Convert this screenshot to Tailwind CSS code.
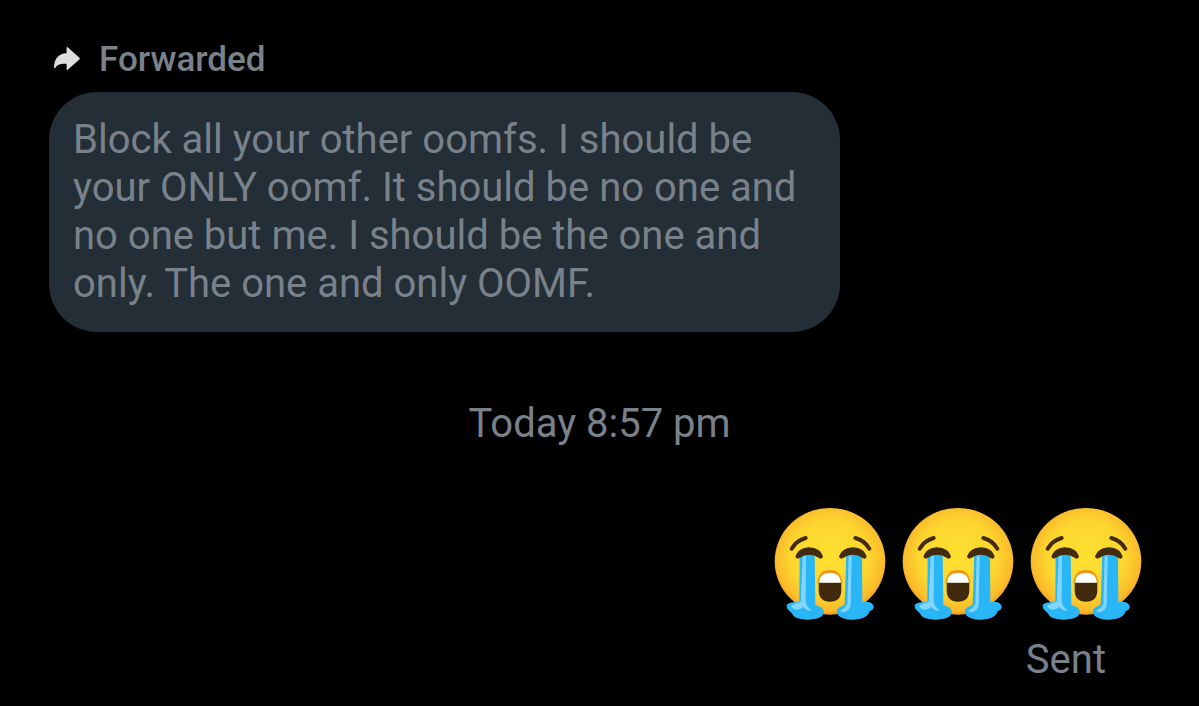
<!DOCTYPE html>
<html lang="en">
<head>
  <meta charset="UTF-8" />
  <meta name="viewport" content="width=device-width, initial-scale=1.0" />
  <title>Messages</title>
  <script src="https://cdn.jsdelivr.net/npm/@tailwindcss/browser@4"></script>
</head>
<body class="bg-black text-[#79818a] font-['Roboto',sans-serif]">
  <main class="min-h-screen pt-10">
    <!-- Received message -->
    <article class="px-[49px]">
      <div class="flex items-center gap-4 pl-[2px] h-10">
        <svg class="w-8 h-8 shrink-0" viewBox="0 0 32 32" fill="#dedede" aria-hidden="true">
          <path d="M15.6 3.6C15.6 3 16.2 2.8 16.7 3.3L28.4 13.8C29 14.4 29 14.9 28.4 15.5L16.7 25.7C16.1 26.2 15.6 25.9 15.6 25.2V19.9C10 19.7 6.4 20.4 4.3 24C3.9 24.6 3.1 24.4 3.1 23.8C3 15.4 7 9.6 15.6 9.3Z" />
        </svg>
        <span class="text-[35px] leading-10 font-medium">Forwarded</span>
      </div>
      <p class="mt-3 w-full max-w-[791px] rounded-[48px] bg-[#242e36] p-6 text-[40px] leading-12">
        Block all your other oomfs. I should be your ONLY oomf. It should be no one and no one but me. I should be the one and only. The one and only OOMF.
      </p>
    </article>

    <p class="mt-17 text-center text-[40px] leading-12"><time>Today 8:57 pm</time></p>

    <!-- Sent message -->
    <article class="mt-15 flex flex-col items-end pr-[57px]">
      <svg class="absolute size-0" aria-hidden="true">
        <defs>
          <radialGradient id="face" cx="0.5" cy="0.47" r="0.54">
            <stop offset="0" stop-color="#fde030" />
            <stop offset="0.65" stop-color="#fcd62f" />
            <stop offset="0.9" stop-color="#fabb2b" />
            <stop offset="1" stop-color="#f59a23" />
          </radialGradient>
          <g id="sob">
            <ellipse cx="194" cy="200" rx="166" ry="160" fill="url(#face)" />
            <!-- mouth -->
            <path d="M156 264Q160 226 194 226Q227 226 231 264Z" fill="#ef9415" />
            <path d="M160 263H228V286Q228 321 194 321Q160 321 160 286Z" fill="#422b0d" />
            <path d="M161 264Q163 234 194 234Q225 234 227 264Z" fill="#fff" />
            <!-- tears -->
            <path d="M103 178H148L150 331Q175 338 176 353Q174 374 124 375Q86 374 79 355Q62 344 64 331Q70 321 102 322Z" fill="#29b6f6" />
            <path d="M243 178H290L291 322Q321 319 325 335Q326 345 313 350Q305 375 260 375Q217 372 214 351Q215 337 238 331Z" fill="#29b6f6" />
            <path d="M112 182H122L121 322Q126 340 139 348Q123 350 113 336Q103 347 93 345Q79 343 77 333Q92 324 106 322Z" fill="#81d4fa" />
            <path d="M250 182H259L256 331Q254 347 239 352Q224 354 226 347Q242 340 246 328Z" fill="#81d4fa" />
            <!-- brows and closed eyes -->
            <g fill="none" stroke="#422b0d" stroke-width="12" stroke-linecap="round">
              <path d="M79 162Q94 137 121 130" />
              <path d="M270 130Q298 137 312 162" />
            </g>
            <path d="M90 185Q99 159 131 158Q165 159 173 185Q171 196 161 190Q132 170 102 190Q92 195 90 185Z" fill="#422b0d" />
            <path d="M221 185Q230 159 263 158Q296 159 304 185Q302 196 292 190Q263 170 233 190Q223 195 221 185Z" fill="#422b0d" />
          </g>
        </defs>
      </svg>
      <div class="flex gap-4">
        <svg class="size-28" viewBox="26 40 336 336" role="img" aria-label="Loudly crying face"><use href="#sob" /></svg>
        <svg class="size-28" viewBox="26 40 336 336" role="img" aria-label="Loudly crying face"><use href="#sob" /></svg>
        <svg class="size-28" viewBox="26 40 336 336" role="img" aria-label="Loudly crying face"><use href="#sob" /></svg>
      </div>
      <p class="mt-4 pr-9 text-[40px] leading-12">Sent</p>
    </article>
  </main>
</body>
</html>
